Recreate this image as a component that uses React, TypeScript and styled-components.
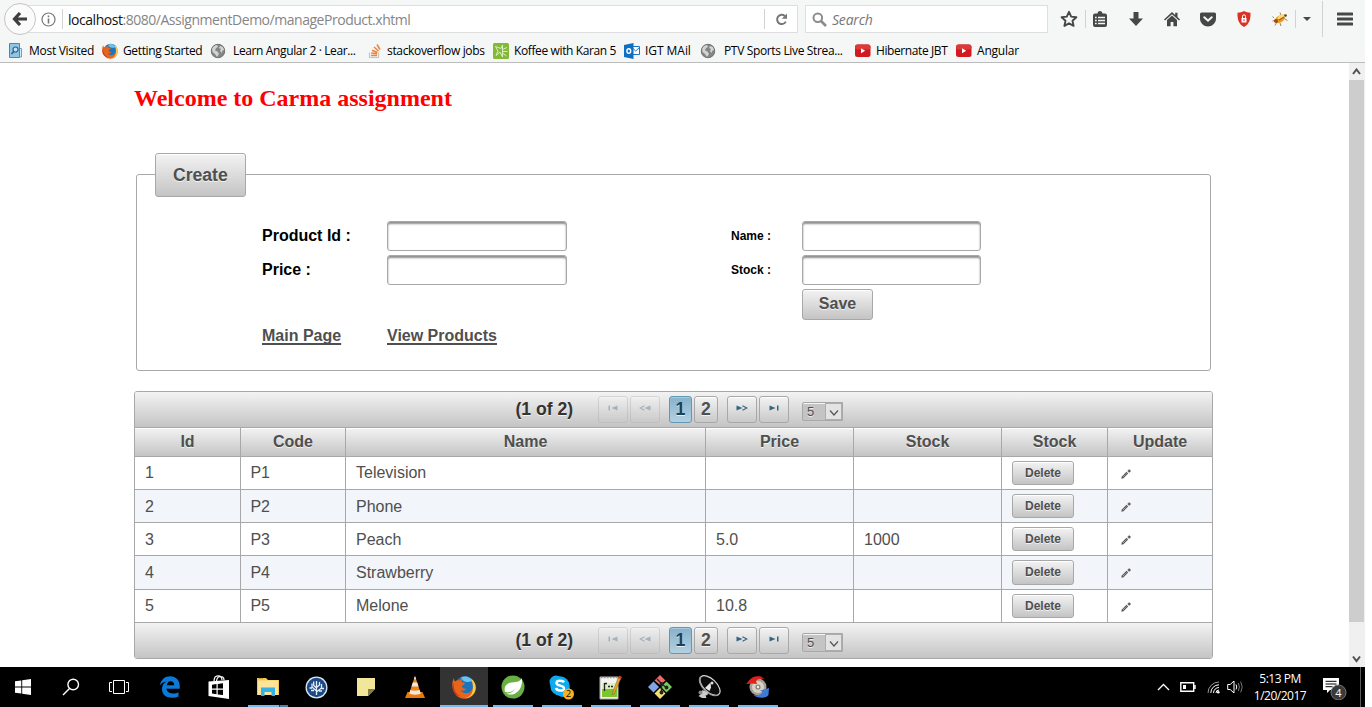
import React from "react";
import styled, { createGlobalStyle, css } from "styled-components";

const GlobalStyle = createGlobalStyle`
  *, *::before, *::after { box-sizing: border-box; }
  body { margin: 0; background: #fff; }
  svg { display: block; flex: none; }
`;

const UI_FONT = `"Open Sans", "Noto Sans", sans-serif`;
const ARIAL = `"Liberation Sans", Arial, sans-serif`;

const Desktop = styled.div`
  width: 1365px;
  height: 707px;
  display: flex;
  flex-direction: column;
  overflow: hidden;
  background: #fff;
`;

/* ---------- browser chrome ---------- */

const Chrome = styled.header`
  height: 63px;
  flex: none;
  background: #f5f6f6;
  border-bottom: 1px solid #bcbcbc;
  font-family: ${UI_FONT};
`;

const NavBar = styled.div`
  height: 38px;
  display: flex;
  align-items: center;
  padding-left: 4px;
`;

const BackButton = styled.div`
  width: 32px;
  height: 32px;
  flex: none;
  border: 1px solid #c4c4c4;
  border-radius: 50%;
  background: #fbfbfb;
  display: flex;
  align-items: center;
  justify-content: center;
  z-index: 1;
`;

const UrlBox = styled.div`
  height: 28px;
  width: 779px;
  margin-left: -17px;
  padding-left: 21px;
  flex: none;
  display: flex;
  align-items: center;
  background: #fff;
  border: 1px solid #dedede;
`;

const Divider = styled.span<{ $h: number; $l?: number; $r?: number }>`
  width: 1px;
  height: ${(p) => p.$h}px;
  flex: none;
  margin-left: ${(p) => p.$l ?? 0}px;
  margin-right: ${(p) => p.$r ?? 0}px;
  background: #d2d2d2;
`;

const Url = styled.span`
  width: 696px;
  padding-top: 2px;
  font-size: 14px;
  letter-spacing: -0.47px;
  line-height: 20px;
  white-space: nowrap;
  color: #858585;
  b {
    font-weight: 400;
    color: #111;
  }
`;

const ReloadSlot = styled.span`
  flex: 1;
  display: flex;
  justify-content: center;
`;

const SearchBox = styled(UrlBox)`
  width: 243px;
  margin-left: 7px;
  padding-left: 6px;
  gap: 5px;
  font-size: 14px;
  letter-spacing: -0.2px;
  font-style: italic;
  color: #777;
`;

const ToolIcon = styled.span<{ $w: number }>`
  width: ${(p) => p.$w}px;
  height: 20px;
  flex: none;
  display: flex;
  align-items: center;
  justify-content: center;
`;

const Bookmarks = styled.div`
  height: 24px;
  padding: 1px 0 0 8px;
  display: flex;
  align-items: center;
`;

const Bookmark = styled.div<{ $w: number; $gap: number; $track: number }>`
  width: ${(p) => p.$w}px;
  flex: none;
  display: flex;
  align-items: center;
  gap: ${(p) => p.$gap}px;
  font-size: 12px;
  letter-spacing: ${(p) => p.$track}px;
  line-height: 16px;
  white-space: nowrap;
  color: #000;
`;

const BookmarkText = styled.span`
  padding-top: 1px;
`;

/* ---------- page ---------- */

const Viewport = styled.div`
  height: 604px;
  flex: none;
  display: flex;
`;

const Page = styled.main`
  width: 1349px;
  padding: 21px 0 0 134px;
  font-family: ${ARIAL};
  color: #4f4f4f;
`;

const Title = styled.h2`
  margin: 0 0 41px;
  height: 28px;
  font: bold 24px/28px "Liberation Serif", "Times New Roman", serif;
  color: #f00;
  white-space: nowrap;
`;

const raised = css`
  border: 1px solid #a8a8a8;
  background: linear-gradient(to bottom, #f3f3f3, #c4c4c4);
  text-shadow: 0 1px 0 rgba(255, 255, 255, 0.7);
`;

const Fieldset = styled.fieldset`
  width: 1075px;
  height: 218px;
  margin: 0 0 20px 2px;
  padding: 0;
  border: 1px solid #a8a8a8;
  border-radius: 3px;
`;

const Legend = styled.legend`
  ${raised}
  width: 91px;
  height: 43.8px;
  margin-left: 18px;
  padding: 0 0 0 17px;
  border-radius: 3px;
  box-shadow: inset 0 1px 0 #fff;
  font-size: 17.6px;
  font-weight: bold;
  line-height: 42px;
`;

const Form = styled.div`
  display: grid;
  grid-template-columns: 125px 344px 71px 180px;
  grid-template-rows: 34px 34px 34px 24px;
  padding: 24.2px 0 0 125px;
`;

const Label = styled.label<{ $small?: boolean }>`
  font-size: ${(p) => (p.$small ? 12 : 16)}px;
  font-weight: bold;
  line-height: ${(p) => (p.$small ? 31 : 29)}px;
  color: #000;
`;

const Input = styled.input<{ $w: number }>`
  width: ${(p) => p.$w}px;
  height: 30px;
  border: 1px solid #a8a8a8;
  border-radius: 3px;
  background: #fff;
  box-shadow: inset 0 2px 2px #8f8f8f;
  outline: none;
`;

const Button = styled.button<{ $w: number; $h: number; $size: number }>`
  ${raised}
  width: ${(p) => p.$w}px;
  height: ${(p) => p.$h}px;
  padding: 0;
  border-radius: 3px;
  box-shadow: inset 0 1px 0 #fff;
  font: bold ${(p) => p.$size}px ${ARIAL};
  color: #4f4f4f;
`;

const SaveCell = styled.div`
  grid-column: 4;
`;

const Link = styled.a`
  font-size: 16px;
  font-weight: bold;
  line-height: 25px;
  color: #4f4f4f;
  text-decoration: underline;
  text-decoration-skip-ink: none;
  text-decoration-thickness: 2px;
  text-underline-offset: 2px;
`;

const DataTable = styled.section`
  width: 1079px;
  border: 1px solid #a8a8a8;
  border-radius: 3px;
  overflow: hidden;
`;

const PagerBar = styled.div<{ $bottom?: boolean }>`
  height: ${(p) => (p.$bottom ? 35 : 36)}px;
  padding: 4px 0 0 380.5px;
  display: flex;
  align-items: flex-start;
  background: linear-gradient(to bottom, #f3f3f3, #c4c4c4);
  border-bottom: ${(p) => (p.$bottom ? "none" : "1px solid #a8a8a8")};
  text-shadow: 0 1px 0 rgba(255, 255, 255, 0.7);
`;

const PagerText = styled.span`
  width: 82.5px;
  font-size: 17.6px;
  font-weight: bold;
  line-height: 27px;
  color: #333;
`;

const PagerButton = styled.span<{ $w: number; $gap?: number; $active?: boolean; $off?: boolean }>`
  width: ${(p) => p.$w}px;
  height: 27px;
  margin-right: ${(p) => p.$gap ?? 2}px;
  flex: none;
  display: flex;
  align-items: center;
  justify-content: center;
  border: 1px solid ${(p) => (p.$active ? "#6397b3" : "#a8a8a8")};
  border-radius: 3px;
  background: ${(p) =>
    p.$active
      ? "linear-gradient(to bottom, #86b2cc, #b3d0e2)"
      : "linear-gradient(to bottom, #f3f3f3, #c9c9c9)"};
  box-shadow: inset 0 1px 0 ${(p) => (p.$active ? "#aacbdd" : "#fff")};
  opacity: ${(p) => (p.$off ? 0.35 : 1)};
  font-size: 17.6px;
  font-weight: bold;
  color: ${(p) => (p.$active ? "#1c4257" : "#4f4f4f")};
  svg {
    margin-bottom: 4px;
  }
`;

const PageSize = styled.span`
  width: 41px;
  height: 19px;
  margin: 6px 0 0 11px;
  display: flex;
  align-items: stretch;
  border: 1px solid #a8a8a8;
  border-radius: 2px 0 0 2px;
  background: #c4c4c4;
  box-shadow: inset 0 1px 0 #f4f4f4;
  font-size: 13px;
  line-height: 17px;
  color: #4f4f4f;
`;

const PageSizeValue = styled.span`
  width: 22px;
  padding-left: 4px;
`;

const PageSizeArrow = styled.span`
  flex: 1;
  display: flex;
  align-items: center;
  justify-content: center;
  padding-top: 2px;
  border: 1px solid #adadad;
  background: #e3e3e3;
`;

const columns = "106px 105px 360px 148px 148px 106px 104px";

const HeadRow = styled.div`
  display: grid;
  grid-template-columns: ${columns};
  height: 29px;
  border-bottom: 1px solid #a8a8a8;
  background: linear-gradient(to bottom, #f3f3f3, #c4c4c4);
  box-shadow: inset 0 1px 0 #fff;
  text-shadow: 0 1px 0 rgba(255, 255, 255, 0.7);
`;

const HeadCell = styled.div`
  border-right: 1px solid #a8a8a8;
  text-align: center;
  font-size: 16px;
  font-weight: bold;
  line-height: 27px;
  &:last-child {
    border-right: none;
  }
`;

const Row = styled.div<{ $h: number; $odd: boolean }>`
  display: grid;
  grid-template-columns: ${columns};
  height: ${(p) => p.$h}px;
  border-bottom: 1px solid #a8a8a8;
  background: ${(p) => (p.$odd ? "#f2f5f9" : "#fff")};
`;

const Cell = styled.div<{ $top?: number; $left?: number }>`
  padding: ${(p) => p.$top ?? 0}px 0 0 ${(p) => p.$left ?? 10}px;
  border-right: 1px solid #a8a8a8;
  font-size: 16px;
  line-height: 32px;
  &:last-child {
    border-right: none;
    padding-left: 13px;
  }
`;

const DeleteText = styled.span`
  display: block;
  font-size: 12px;
  line-height: 22px;
  text-align: center;
`;

const ScrollTrack = styled.div`
  width: 16px;
  padding-right: 1px;
  display: flex;
  flex-direction: column;
  align-items: stretch;
  background: #f0f0f0;
`;

const ScrollArrow = styled.div`
  height: 17px;
  padding-top: 1px;
  display: flex;
  justify-content: center;
  align-items: center;
`;

const ScrollThumb = styled.div`
  height: 542px;
  margin-bottom: 28px;
  background: #cdcdcd;
`;

/* ---------- taskbar ---------- */

const Taskbar = styled.footer`
  height: 40px;
  flex: none;
  display: flex;
  background: #000;
  color: #fff;
  font-family: ${UI_FONT};
`;

const TaskSlot = styled.div<{ $w: number; $active?: boolean; $line?: boolean; $stacked?: boolean }>`
  width: ${(p) => p.$w}px;
  height: 40px;
  flex: none;
  display: flex;
  flex-direction: column;
  align-items: center;
  justify-content: space-between;
  background: ${(p) => (p.$active ? "#333" : "transparent")};
  &::after {
    content: "";
    height: 2px;
    width: ${(p) => (p.$active ? 48 : 40)}px;
    background: ${(p) =>
      p.$stacked
        ? "linear-gradient(to right, #76b9ed 31px, #2b4456 31px, #2b4456 32px, #527fa3 32px)"
        : p.$line
          ? "#76b9ed"
          : "transparent"};
  }
`;

const TaskIcon = styled.div`
  height: 38px;
  padding-top: 2px;
  display: flex;
  align-items: center;
  justify-content: center;
`;

const PinnedGap = styled.span`
  width: 6px;
  flex: none;
`;

const Tray = styled.div`
  width: 210px;
  margin-left: auto;
  display: flex;
  align-items: center;
`;

const TraySlot = styled.span<{ $w: number }>`
  width: ${(p) => p.$w}px;
  flex: none;
  display: flex;
  justify-content: center;
`;

const Clock = styled.div`
  width: 60px;
  display: flex;
  flex-direction: column;
  align-items: center;
  font-size: 12px;
  line-height: 17.5px;
  letter-spacing: -0.5px;
  white-space: nowrap;
`;

const ShowDesktop = styled.span`
  width: 5px;
  height: 40px;
  margin-left: auto;
  border-left: 1px solid #5a5a5a;
`;

/* ---------- icons ---------- */

const Firefox = ({ size }: { size: number }) => (
  <svg width={size} height={size} viewBox="0 0 24 24">
    <circle cx="13" cy="11" r="10" fill="#1b74bd" />
    <path d="M9 2.500c5-2.500 11 .5 12.500 5-3-2-4 0-7-.5-2-.5-4-1-5.500-4.500z" fill="#6cc4ee" />
    <path d="M2 3c0 2 .5 3 1 3.500C4.500 5 6.500 5 7.500 5.500 9 3.500 10 3.500 10.500 3.500 9.500 5 9.500 6 10 7l3 1c0 1.500-2 2-3 3 0 2 2 3.500 4.500 2.500-1 2-3.500 3-6 1.500 3 5 10 4 12-1 1-3 .5-6-1-8 4 2.500 5 8 2.500 12.500C18 25 9 25.500 4 20-.5 15-.5 7 2 3z" fill="#e8641b" />
    <path d="M19 3.500c5.500 4 6 10.500 3 15-2.500 3.500-6 4.800-9 4.500 5-1 7-3.500 7.700-8 .7-4-.2-8-1.700-11.500z" fill="#fbc943" />
    <path d="M2 8c-1 5 1 11 7 13.500-3-.2-6-2-7.500-5-1.300-3-1-6 .5-8.500z" fill="#c43425" />
  </svg>
);

const Globe = () => (
  <svg width="16" height="16" viewBox="0 0 16 16">
    <circle cx="8" cy="8" r="7" fill="#858585" />
    <path d="M2 5c1.500-2.500 3.500-3 5-3l1 2-2 1-1 2.500 2.500 1L9 11l-2 3-2-3-2.500-2zM10 3l3 1 1.500 3-2 .5-1 2.500-1.500-2 1-2-2-1z" fill="#d3d3d3" />
    <circle cx="8" cy="8" r="6.700" fill="none" stroke="#747474" />
  </svg>
);

const YouTube = () => (
  <svg width="16" height="16" viewBox="0 0 16 16">
    <rect x="0" y="1.500" width="15.500" height="12.500" rx="2.500" fill="#d1191f" />
    <rect x="0" y="1.500" width="15.500" height="5" rx="2.500" fill="#dc3a3a" />
    <path d="M6 5.200v5l4.200-2.500z" fill="#fff" />
  </svg>
);

const MostVisited = () => (
  <svg width="16" height="16" viewBox="0 0 16 16">
    <path d="M1.500.5h10v14h-10z" fill="#8fc6e6" stroke="#4a86ad" />
    <path d="M12 5.500h1.500v8.500H12" fill="#d8ecf7" stroke="#6ba2c3" />
    <circle cx="7.500" cy="6.500" r="2.500" fill="#c3e3f4" stroke="#2a638c" strokeWidth="1.200" />
    <path d="M5.700 8.500 3.500 11" stroke="#2a638c" strokeWidth="1.600" />
  </svg>
);

const StackOverflow = () => (
  <svg width="16" height="16" viewBox="0 0 16 16" fill="none">
    <path d="M1.500 9.500v5h9v-5" stroke="#c9c4be" strokeWidth="1.200" />
    <path d="M3 12.500h6M3.200 10l5.900.8M4 7.200l5.400 2.300M6 4l4.500 4M9 1.500l3 5" stroke="#ef8236" strokeWidth="1.500" />
  </svg>
);

const GreenStar = () => (
  <svg width="16" height="16" viewBox="0 0 16 16">
    <rect width="16" height="16" rx="1.500" fill="#82b936" />
    <path d="M9.500 2v12L7 9 3 12.500 5 8 2.500 3.500 8 5.500zM9.500 6.500l4.500-2M9.500 8.500h5M9.500 10l4 3" fill="none" stroke="#e5f2cf" strokeWidth=".9" />
  </svg>
);

const Outlook = () => (
  <svg width="16" height="16" viewBox="0 0 16 16">
    <path d="M8 3.500h7.500v8H8z" fill="#fff" stroke="#1f74c0" />
    <path d="m8.500 5 3.200 3 3.800-3.500" fill="none" stroke="#1f74c0" />
    <path d="M0 2 9.500 0v16L0 14z" fill="#0c70c4" />
    <ellipse cx="4.800" cy="8" rx="1.900" ry="2.300" fill="none" stroke="#fff" strokeWidth="1.400" />
  </svg>
);

const Pencil = () => (
  <svg width="10" height="10" viewBox="0 0 10 10">
    <path d="M.3 9.700.8 7.500 5.500 2.800l1.700 1.700L2.500 9.200z" fill="#5a5a5a" />
    <path d="M2.200 7.800 6 4" stroke="#fff" strokeWidth=".7" strokeDasharray=".9 .8" />
    <path d="M6.700 2h3M8.200.5v3" stroke="#5a5a5a" strokeWidth="1.300" />
  </svg>
);

const FirstGlyph = () => (
  <svg width="10" height="6" viewBox="0 0 10 6">
    <path d="M.5.500h1.500v5H.5zM9.500.500v5L3.500 3z" fill="#336480" />
  </svg>
);
const PrevGlyph = () => (
  <svg width="12" height="6" viewBox="0 0 12 6">
    <path d="M11.500.500v5L5.500 3z" fill="#336480" />
    <path d="M5.500.700 1.200 3l4.300 2.300" fill="none" stroke="#336480" strokeWidth="1.100" />
  </svg>
);
const NextGlyph = () => (
  <svg width="12" height="6" viewBox="0 0 12 6">
    <path d="M.5.500v5L6.500 3z" fill="#336480" />
    <path d="M6.500.700 10.800 3 6.500 5.300" fill="none" stroke="#336480" strokeWidth="1.100" />
  </svg>
);
const LastGlyph = () => (
  <svg width="10" height="6" viewBox="0 0 10 6">
    <path d="M8 .5h1.500v5H8zM.5.500v5l6-2.500z" fill="#336480" />
  </svg>
);

const Chevron = ({ w, h, up, color, stroke }: { w: number; h: number; up?: boolean; color: string; stroke: number }) => (
  <svg width={w} height={h + 2} viewBox={`0 0 ${w} ${h + 2}`}>
    <path
      d={up ? `M1 ${h}L${w / 2} 1.500L${w - 1} ${h}` : `M1 1.500L${w / 2} ${h}L${w - 1} 1.500`}
      fill="none"
      stroke={color}
      strokeWidth={stroke}
    />
  </svg>
);

/* ---------- data ---------- */

const bookmarks = [
  { text: "Most Visited", icon: <MostVisited />, w: 94, gap: 5, track: -0.28 },
  { text: "Getting Started", icon: <Firefox size={16} />, w: 108, gap: 5, track: -0.37 },
  { text: "Learn Angular 2 · Lear...", icon: <Globe />, w: 158, gap: 7, track: -0.37 },
  { text: "stackoverflow jobs", icon: <StackOverflow />, w: 125, gap: 3, track: -0.33 },
  { text: "Koffee with Karan 5", icon: <GreenStar />, w: 131, gap: 5, track: -0.38 },
  { text: "IGT MAil", icon: <Outlook />, w: 76, gap: 5, track: -0.05 },
  { text: "PTV Sports Live Strea...", icon: <Globe />, w: 155, gap: 8, track: -0.35 },
  { text: "Hibernate JBT", icon: <YouTube />, w: 101, gap: 5, track: -0.4 },
  { text: "Angular", icon: <YouTube />, w: 70, gap: 5, track: -0.2 },
];

const heads = ["Id", "Code", "Name", "Price", "Stock", "Stock", "Update"];

const products = [
  { id: 1, code: "P1", name: "Television", price: "", stock: "", h: 33, top: 0 },
  { id: 2, code: "P2", name: "Phone", price: "", stock: "", h: 33, top: 1 },
  { id: 3, code: "P3", name: "Peach", price: "5.0", stock: "1000", h: 33, top: 1 },
  { id: 4, code: "P4", name: "Strawberry", price: "", stock: "", h: 34, top: 1 },
  { id: 5, code: "P5", name: "Melone", price: "10.8", stock: "", h: 33, top: 0 },
];

const Pager = ({ bottom }: { bottom?: boolean }) => (
  <PagerBar $bottom={bottom}>
    <PagerText>(1 of 2)</PagerText>
    <PagerButton $w={30} $off><FirstGlyph /></PagerButton>
    <PagerButton $w={30} $gap={9} $off><PrevGlyph /></PagerButton>
    <PagerButton $w={23} $active>1</PagerButton>
    <PagerButton $w={24} $gap={9}>2</PagerButton>
    <PagerButton $w={30}><NextGlyph /></PagerButton>
    <PagerButton $w={30}><LastGlyph /></PagerButton>
    <PageSize>
      <PageSizeValue>5</PageSizeValue>
      <PageSizeArrow><Chevron w={10} h={6} color="#555" stroke={1.2} /></PageSizeArrow>
    </PageSize>
  </PagerBar>
);

type TaskItem = { w: number; line?: boolean; stacked?: boolean; icon: React.ReactNode };

const pinnedApps: TaskItem[] = [
  {
    w: 46,
    icon: (
      <svg width="16" height="16" viewBox="0 0 16 16" fill="#fff">
        <path d="M0 2.300 6.300 1.400v6.100H0zM7.200 1.300 16 0v7.500H7.200zM0 8.400h6.300v6.200L0 13.700zM7.200 8.400H16V16l-8.800-1.300z" />
      </svg>
    ),
  },
  {
    w: 50,
    icon: (
      <svg width="18" height="18" viewBox="0 0 18 18" fill="none" stroke="#fff" strokeWidth="1.400">
        <circle cx="11.200" cy="6.500" r="5.300" />
        <path d="M7.500 10.500 1 17" />
      </svg>
    ),
  },
  {
    w: 46,
    icon: (
      <svg width="20" height="15" viewBox="0 0 20 15" fill="none" stroke="#fff">
        <path d="M4.500.500h11v13h-11zM3 2.500H.5v9H3M17 2.500h2.500v9H17" />
      </svg>
    ),
  },
  {
    w: 56,
    icon: (
      <svg width="22" height="22" viewBox="0 0 22 22">
        <path d="M.8 9.500C2 3.500 6 .3 11.200.3 17 .3 20.800 4.500 20.800 10.500v2.300H7.500c.3 3 3 4.700 6.500 4.700 2.300 0 4-.5 5.500-1.300v4.300c-2 .9-4 1.200-6.500 1.200-6 0-10-3.500-10-8.500 0-3.500 1.500-6 4.500-7.600C4.500 6 2.200 7.200.8 9.500zm7-.2h7.400c0-2.500-1.400-4-3.700-4S8.200 7 7.800 9.300z" fill="#0a79d8" />
      </svg>
    ),
  },
  {
    w: 42,
    icon: (
      <svg width="22" height="24" viewBox="0 0 22 24">
        <path d="M6 6.500C6 2 8 .8 10 .8S14 2 14 5M8.500 6C9 2.500 10.500 1.500 12.500 1.500S16 3 16 5" fill="none" stroke="#fff" strokeWidth="1.200" />
        <path d="M.5 6.500 21 5v19L.5 21z" fill="#fff" />
        <path d="M4 9.700 8.500 9v4.500H4zM9.700 8.900l5.300-.7v5.300H9.700zM4 14.700h4.500v4.500L4 18.600zM9.700 14.700H15v5.400l-5.300-.7z" fill="#000" />
      </svg>
    ),
  },
  {
    w: 56,
    line: true,
    stacked: true,
    icon: (
      <svg width="22" height="20" viewBox="0 0 22 20">
        <path d="M0 1h9l2 2h11v15H0z" fill="#f5c752" />
        <path d="M1 3.500h20V18H1z" fill="#fde49a" />
        <path d="M4 10.500h14V19h-3.500v-4h-7v4H4z" fill="#35b1e4" />
        <path d="M2 1.500h4" stroke="#d99d20" />
      </svg>
    ),
  },
  {
    w: 41,
    icon: (
      <svg width="23" height="23" viewBox="0 0 23 23">
        <circle cx="11.500" cy="11.500" r="11" fill="#dce7f2" />
        <circle cx="11.500" cy="11.500" r="9.700" fill="#1c4a86" />
        <path d="M11.500 19V5M11.500 15 7 11V7.500M11.500 12 8.700 9.500V5.500M11.500 16l5-4V8M11.500 11.500l3-2.500V6M7 12H4.500M16.500 12.500H19M9 14.500H6M14 15h3" fill="none" stroke="#e6eef6" strokeWidth="1.300" />
      </svg>
    ),
  },
  {
    w: 58,
    icon: (
      <svg width="18" height="18" viewBox="0 0 18 18">
        <path d="M0 0h18v11l-7 7H0z" fill="#f2e698" />
        <path d="M18 11h-7v7z" fill="#847c45" />
      </svg>
    ),
  },
  {
    w: 39,
    icon: (
      <svg width="20" height="22" viewBox="0 0 20 22">
        <path d="M2.500 16h15l2.500 6H0z" fill="#e8780c" />
        <path d="M10 0 4 18c2 1.700 10 1.700 12 0z" fill="#f6850f" />
        <path d="M7.800 6.500h4.400l1.300 4H6.500zM5.300 14l-1 3.500c3 1.500 8.500 1.500 11.400 0L14.700 14c-3 1-6.500 1-9.400 0zM10 0 8.800 3.200h2.400z" fill="#e9e9e9" />
      </svg>
    ),
  },
];

const openApps: React.ReactNode[] = [
  <svg width="24" height="24" viewBox="0 0 24 24">
    <circle cx="12" cy="12" r="11.500" fill="#68b043" />
    <path d="M21 3c-1.500 3.500-5 4-10 4.500C5 8 2.500 12 4 17c6 1 8-1 11-4-3 4.500-6.500 5.500-10 5.500C12 22 22 17 21 3z" fill="#fff" />
  </svg>,
  <svg width="25" height="26" viewBox="1.500 0 25 26">
    <circle cx="8.500" cy="8" r="6.500" fill="#0caaf0" />
    <circle cx="15.500" cy="16" r="7" fill="#0caaf0" />
    <circle cx="12.500" cy="12" r="9.700" fill="#0caaf0" />
    <path d="M16.500 8.300C15.500 6.500 9 5.800 9 9c0 3.500 7.500 1.800 7.500 5.300 0 3.400-7 2.700-8-.3" fill="none" stroke="#fff" strokeWidth="2.500" />
    <circle cx="21" cy="20" r="5.500" fill="#fbb11c" />
    <text x="21" y="23.400" fontSize="9.500" textAnchor="middle" fontFamily="Open Sans" fill="#111">2</text>
  </svg>,
  <svg width="23" height="25" viewBox="0 0 23 25">
    <path d="M1 2h18v22H1z" fill="#f3f3f0" stroke="#aaa" />
    <path d="M3 14h15v8H3z" fill="#7cc62b" />
    <path d="M3 8h15v6H3z" fill="#dcefbf" />
    <path d="M2 2.500h16" stroke="#999" strokeWidth="1.500" strokeDasharray="1.500 1.500" />
    <path d="M5.500 8v8M5.500 8.500H8M9 11.500h2M12 11.500h2" stroke="#222" strokeWidth="1.300" />
    <path d="m20 1 2.500 1-7 16-2 2 .2-3z" fill="#eba52c" stroke="#8a5a18" strokeWidth=".5" />
    <path d="m20 1 2.500 1-.9 2-2.400-1z" fill="#d9342c" />
  </svg>,
  <svg width="24" height="24" viewBox="0 0 24 24">
    <path d="m12 0 5.500 5.500L12 10 6.500 5.500z" fill="#ea6a68" />
    <path d="m5.500 6.500 5.500 5.500-5.500 5.500L0 12z" fill="#7fa7e8" />
    <path d="m12 13 5.500 5.500L12 24l-5.500-5.500z" fill="#f4dc76" />
    <path d="m18.500 6.500L24 12l-5.500 5.500L13 12z" fill="#7ccc64" />
    <path d="M9 4l4.500 4.500V17M13.500 9l5 3.500" fill="none" stroke="#222" strokeWidth="1.400" />
    <circle cx="13.500" cy="8.800" r="1.900" fill="#222" />
    <circle cx="18.500" cy="12.500" r="1.900" fill="#222" />
    <circle cx="13.500" cy="17.500" r="1.900" fill="#222" />
  </svg>,
  <svg width="24" height="24" viewBox="0 0 24 24">
    <ellipse cx="13" cy="10.500" rx="6.500" ry="12.500" transform="rotate(-46 13 10.500)" fill="#0c0c0c" stroke="#d9d9d9" strokeWidth="1.200" />
    <path d="M3.500 1.500C1 5 3 11 8 15.500c4.500 4 10 6 13.500 4.500" fill="none" stroke="#9a9a9a" strokeWidth="1.200" />
    <path d="m8 13 5.500-5.500.5 5-1.500 3.500z" fill="#e8e8e8" />
    <path d="m5.500 15 5.500 2.500-.5 2.500-2 .5 1 2.500H5L1.500 21l2-1.500z" fill="#ccc" />
    <circle cx="3.500" cy="17.500" r="2" fill="#888" />
    <circle cx="15" cy="8" r="1.500" fill="#ddd" />
  </svg>,
  <svg width="24" height="24" viewBox="0 0 24 24">
    <circle cx="12" cy="12" r="8.500" fill="#a79e94" />
    <circle cx="12" cy="12" r="6" fill="#d8d2c6" />
    <circle cx="12" cy="12" r="2.600" fill="#8c857b" />
    <circle cx="12" cy="12" r="1.200" fill="#f2efe8" />
    <path d="M0 9 3.500 5C6 1.500 10 .5 15 1.500l4 2.500c-4-.7-7.500-.5-9 2l1 3-5-.500z" fill="#e0201c" />
    <path d="M23 13l-.5 7c-2 3-7 3.500-12 2l-3-2c4 .5 8 0 9-3L14 15.500z" fill="#3d7bd9" />
  </svg>,
];

export default function App() {
  return (
    <Desktop>
      <GlobalStyle />
      <Chrome>
        <NavBar>
          <BackButton>
            <svg width="16" height="14" viewBox="0 0 16 14">
              <path d="M8 1 2.500 7 8 13M3 7h12" fill="none" stroke="#3f3f3f" strokeWidth="3.200" />
            </svg>
          </BackButton>
          <UrlBox>
            <svg width="15" height="15" viewBox="0 0 15 15" fill="none" stroke="#777">
              <circle cx="7.500" cy="7.500" r="6.500" strokeWidth="1.200" />
              <path d="M7.500 6.500v5M7.500 3.500v1.700" strokeWidth="1.600" />
            </svg>
            <Divider $h={20} $l={6} $r={5} />
            <Url><b>localhost</b>:8080/AssignmentDemo/manageProduct.xhtml</Url>
            <Divider $h={20} />
            <ReloadSlot>
              <svg width="13" height="13" viewBox="0 0 13 13">
                <path d="M10.800 8.600A4.600 4.600 0 1 1 9.800 3" fill="none" stroke="#777" strokeWidth="2" />
                <path d="M12 .6v5.200H6.800z" fill="#777" />
              </svg>
            </ReloadSlot>
          </UrlBox>
          <SearchBox>
            <svg width="15" height="15" viewBox="0 0 15 15" fill="none" stroke="#8c8c8c">
              <circle cx="5.800" cy="5.800" r="4.300" strokeWidth="2" />
              <path d="m9 9 5 5" strokeWidth="2.600" />
            </svg>
            <BookmarkText>Search</BookmarkText>
          </SearchBox>
          <ToolIcon $w={42}>
            <svg width="18" height="18" viewBox="0 0 18 18">
              <path d="m9 1.800 2.200 4.800 5.200.6-3.900 3.500 1.100 5.200L9 13.300l-4.600 2.600 1.100-5.200L1.600 7.200l5.200-.6z" fill="none" stroke="#474747" strokeWidth="1.900" strokeLinejoin="round" />
            </svg>
          </ToolIcon>
          <Divider $h={18} $l={-5} />
          <ToolIcon $w={28}>
            <svg width="14" height="16" viewBox="0 0 14 16">
              <path d="M4.500 2.500a2.500 2.500 0 0 1 5 0H12a2 2 0 0 1 2 2V14a2 2 0 0 1-2 2H2a2 2 0 0 1-2-2V4.500a2 2 0 0 1 2-2z" fill="#474747" />
              <path d="M2 6.500h1.700M5 6.500h7M2 9.500h1.700M5 9.500h7M2 12.500h1.700M5 12.500h7" stroke="#f5f6f6" strokeWidth="1.700" />
            </svg>
          </ToolIcon>
          <ToolIcon $w={43}>
            <svg width="14" height="16" viewBox="0 0 14 16"><path d="M4.500 1h5v6.500H14L7 15 0 7.500h4.500z" fill="#474747" /></svg>
          </ToolIcon>
          <ToolIcon $w={29}>
            <svg width="16" height="16" viewBox="0 0 16 16">
              <path d="M8 1 0 8.500 1 9.600 8 3.200l7 6.400 1-1.100-2.500-2.400V1.800h-2.300v2.100z" fill="#474747" />
              <path d="M8 4.600 3 9v6.300h3.600V11h2.800v4.300H13V9z" fill="#474747" />
            </svg>
          </ToolIcon>
          <ToolIcon $w={43}>
            <svg width="16" height="15" viewBox="0 0 16 15">
              <path d="M1.500.500h13A1.500 1.500 0 0 1 16 2v4.500c0 4.500-4 8-8 8s-8-3.500-8-8V2A1.500 1.500 0 0 1 1.500.500z" fill="#474747" />
              <path d="M4.300 5.200 8 8.700l3.700-3.500" fill="none" stroke="#f5f6f6" strokeWidth="2" strokeLinecap="round" />
            </svg>
          </ToolIcon>
          <ToolIcon $w={29}>
            <svg width="14" height="16" viewBox="0 0 14 16">
              <path d="M7 0c2 1.200 4 1.700 6.500 1.700C13.700 8 12.500 13 7 16 1.500 13 .3 8 .5 1.700 3 1.700 5 1.200 7 0z" fill="#d93123" />
              <path d="M4.500 7h5v4.500h-5z" fill="#fff" />
              <path d="M5.500 7V5.300a1.500 1.500 0 0 1 3 0V7" fill="none" stroke="#fff" />
              <path d="M7 8.200v2" stroke="#d93123" />
            </svg>
          </ToolIcon>
          <ToolIcon $w={43}>
            <svg width="16" height="16" viewBox="0 0 16 16">
              <path d="M2 7 .5 5.500M5 11l-2 3.500M8 12l1 3M9 4 8 1.500M13 8l2.500 1.500M3 9.500.5 10" stroke="#8a6a3a" strokeWidth=".8" />
              <ellipse cx="8" cy="8" rx="5.500" ry="3.400" transform="rotate(-28 8 8)" fill="#e89a1c" />
              <ellipse cx="9.500" cy="5.600" rx="4.200" ry="1.800" transform="rotate(-28 9.500 5.600)" fill="#fbdc7c" />
              <circle cx="4" cy="10" r="2" fill="#9d4a14" />
              <path d="m7 9 5-3" stroke="#c0501c" strokeWidth="1.200" />
              <circle cx="13.500" cy="4.500" r="1.300" fill="#5a3a18" />
            </svg>
          </ToolIcon>
          <Divider $h={18} $l={-6} />
          <ToolIcon $w={21}>
            <svg width="8" height="4" viewBox="0 0 8 4"><path d="M0 0h8L4 4z" fill="#474747" /></svg>
          </ToolIcon>
          <Divider $h={36} $l={5} />
          <ToolIcon $w={43}>
            <svg width="16" height="14" viewBox="0 0 16 14">
              <path d="M1 2h14M1 7h14M1 12h14" stroke="#474747" strokeWidth="3" strokeLinecap="round" />
            </svg>
          </ToolIcon>
        </NavBar>
        <Bookmarks>
          {bookmarks.map((b) => (
            <Bookmark key={b.text} $w={b.w} $gap={b.gap} $track={b.track}>
              {b.icon}
              <BookmarkText>{b.text}</BookmarkText>
            </Bookmark>
          ))}
        </Bookmarks>
      </Chrome>

      <Viewport>
        <Page>
          <Title>Welcome to Carma assignment</Title>
          <Fieldset>
            <Legend>Create</Legend>
            <Form>
              <Label>Product Id :</Label>
              <Input $w={180} />
              <Label $small>Name :</Label>
              <Input $w={179} />
              <Label>Price :</Label>
              <Input $w={180} />
              <Label $small>Stock :</Label>
              <Input $w={179} />
              <SaveCell>
                <Button $w={71} $h={31} $size={16}>Save</Button>
              </SaveCell>
              <Link>Main Page</Link>
              <Link>View Products</Link>
            </Form>
          </Fieldset>

          <DataTable>
            <Pager />
            <HeadRow>
              {heads.map((h, i) => (
                <HeadCell key={i}>{h}</HeadCell>
              ))}
            </HeadRow>
            {products.map((p, i) => (
              <Row key={p.id} $h={p.h} $odd={i % 2 === 1}>
                <Cell $top={p.top}>{p.id}</Cell>
                <Cell $top={p.top} $left={9.4}>{p.code}</Cell>
                <Cell $top={p.top}>{p.name}</Cell>
                <Cell $top={p.top}>{p.price}</Cell>
                <Cell $top={p.top}>{p.stock}</Cell>
                <Cell $top={4}>
                  <Button as="div" $w={62} $h={p.h === 34 ? 25 : 24} $size={12}>
                    <DeleteText>Delete</DeleteText>
                  </Button>
                </Cell>
                <Cell $top={12}><Pencil /></Cell>
              </Row>
            ))}
            <Pager bottom />
          </DataTable>
        </Page>
        <ScrollTrack>
          <ScrollArrow><Chevron w={9} h={6} up color="#505050" stroke={2} /></ScrollArrow>
          <ScrollThumb />
          <ScrollArrow><Chevron w={9} h={6} color="#505050" stroke={2} /></ScrollArrow>
        </ScrollTrack>
      </Viewport>

      <Taskbar>
        {pinnedApps.map((t, i) => (
          <TaskSlot key={i} $w={t.w} $line={t.line} $stacked={t.stacked}>
            <TaskIcon>{t.icon}</TaskIcon>
          </TaskSlot>
        ))}
        <PinnedGap />
        <TaskSlot $w={48} $active $line>
          <TaskIcon><Firefox size={24} /></TaskIcon>
        </TaskSlot>
        {openApps.map((icon, i) => (
          <TaskSlot key={i} $w={49} $line>
            <TaskIcon>{icon}</TaskIcon>
          </TaskSlot>
        ))}
        <Tray>
          <TraySlot $w={16}><Chevron w={13} h={7} up color="#fff" stroke={1.3} /></TraySlot>
          <TraySlot $w={34}>
            <svg width="16" height="10" viewBox="0 0 16 10">
              <path d="M.8.800h12.900v8.400H.8z" fill="none" stroke="#fff" strokeWidth="1.400" />
              <path d="M3 3h3v4H3zM14.200 3h1.500v4h-1.500z" fill="#fff" />
            </svg>
          </TraySlot>
          <TraySlot $w={16}>
            <svg width="13" height="13" viewBox="0 0 13 13" fill="none" stroke="#fff">
              <path d="M1 12A11 11 0 0 1 12 1" stroke="#999" />
              <path d="M3.800 12A8.200 8.200 0 0 1 12 3.800M6.500 12A5.500 5.500 0 0 1 12 6.500M9 12a3 3 0 0 1 3-3" />
              <circle cx="11.300" cy="11.300" r="1.300" fill="#fff" stroke="none" />
            </svg>
          </TraySlot>
          <TraySlot $w={29}>
            <svg width="17" height="14" viewBox="0 0 17 14" fill="none" stroke="#fff">
              <path d="M.7 4.500h2.500L7 1v12L3.200 9.500H.7z" />
              <path d="M9 4.500q1.500 2.500 0 5" />
              <path d="M11.300 3q2.300 4 0 8M13.700 1.500q3 5.500 0 11" stroke="#777" />
            </svg>
          </TraySlot>
          <Clock>
            <span>5:13 PM</span>
            <span>1/20/2017</span>
          </Clock>
          <TraySlot $w={49}>
            <svg width="26" height="26" viewBox="0 0 26 26">
              <path d="M1 4h16v12H8l-3 3v-3H1z" fill="#fff" />
              <path d="M3.500 7.300h11M3.500 10h11M3.500 12.700h7" stroke="#000" />
              <circle cx="16.500" cy="18.500" r="7.500" fill="#3a3a3a" stroke="#777" />
              <text x="16.500" y="22.500" fontSize="11" textAnchor="middle" fontFamily="Open Sans" fill="#fff">4</text>
            </svg>
          </TraySlot>
          <ShowDesktop />
        </Tray>
      </Taskbar>
    </Desktop>
  );
}
